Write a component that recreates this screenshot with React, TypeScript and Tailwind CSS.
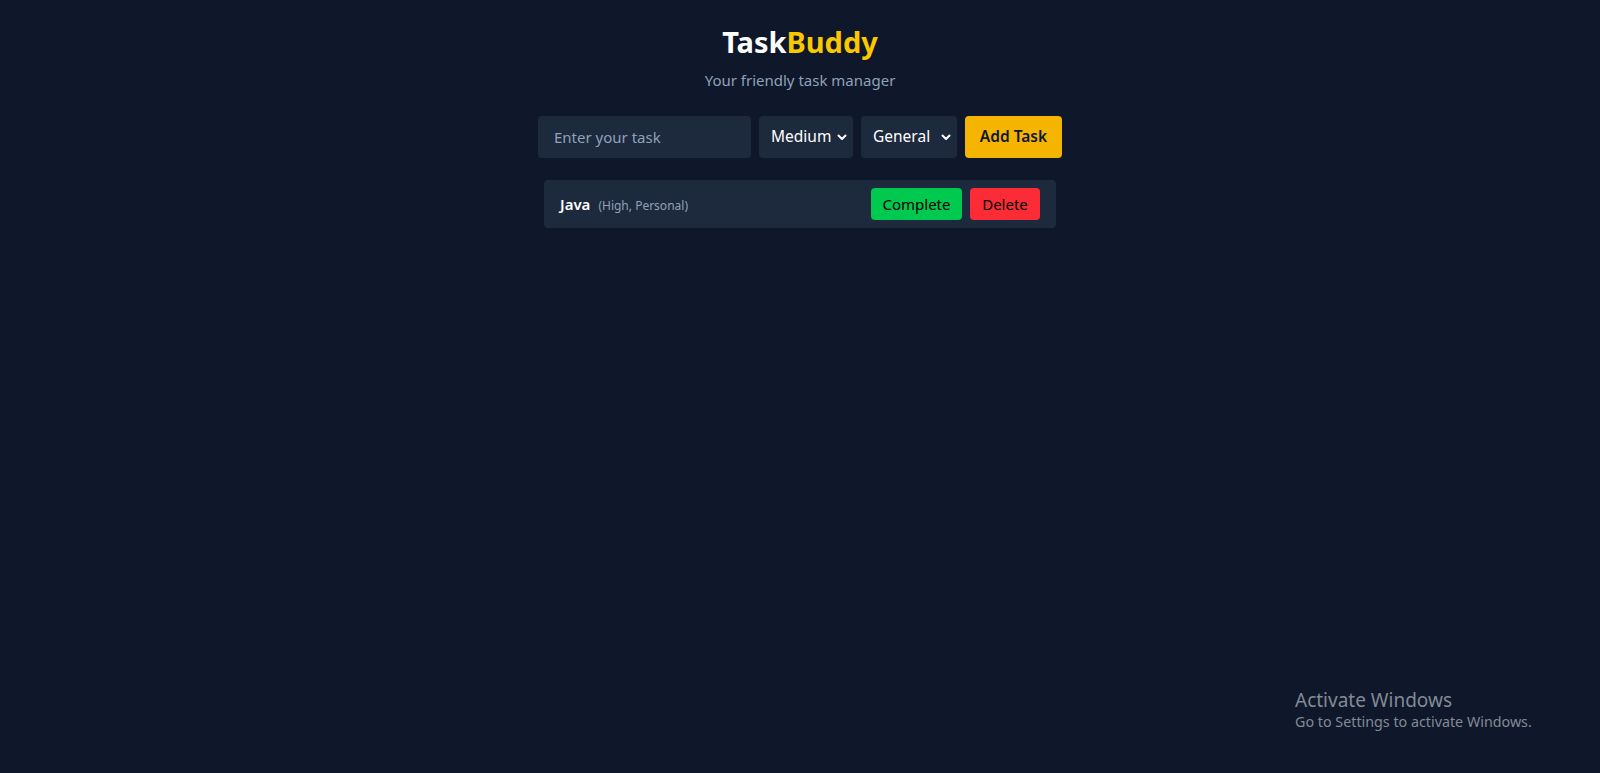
import React, { useState } from 'react'

type Task = {
  id: number
  text: string
  priority: string
  category: string
}

const Chevron: React.FC = () => (
  <svg
    className="pointer-events-none absolute right-[5px] top-1/2 -translate-y-1/2"
    width="12"
    height="12"
    viewBox="0 0 12 12"
    fill="none"
  >
    <path d="M2.5 4.5 L6 8 L9.5 4.5" stroke="white" strokeWidth="2" strokeLinecap="round" strokeLinejoin="round" />
  </svg>
)

export default function App() {
  const [text, setText] = useState('')
  const [priority, setPriority] = useState('Medium')
  const [category, setCategory] = useState('General')
  const [tasks, setTasks] = useState<Task[]>([
    { id: 1, text: 'Java', priority: 'High', category: 'Personal' },
  ])

  const addTask = () => {
    if (!text.trim()) return
    setTasks([...tasks, { id: Date.now(), text, priority, category }])
    setText('')
  }

  return (
    <div
      className="relative min-h-[773px] bg-[#0f172b] px-6 pt-6 text-white"
      style={{ fontFamily: '"Segoe UI", "Noto Sans", sans-serif' }}
    >
      {/* Header */}
      <h1 className="mb-2 text-center text-[29px] leading-9 font-bold">
        Task<span className="text-[#fac800]">Buddy</span>
      </h1>
      <p className="mb-6 text-center text-[15px] leading-6 text-[#90a1b9]">Your friendly task manager</p>

      {/* Form */}
      <div className="mb-[22px] flex justify-center gap-2">
        <input
          value={text}
          onChange={(e) => setText(e.target.value)}
          placeholder="Enter your task"
          className="h-[42px] w-[213px] rounded bg-[#1d293d] px-4 text-[15px] text-white placeholder:text-[#90a1b9] outline-none"
        />
        <div className="relative">
          <select
            value={priority}
            onChange={(e) => setPriority(e.target.value)}
            className="h-[42px] w-[94px] appearance-none rounded bg-[#1d293d] pl-3 text-[15.5px] text-white outline-none"
          >
            <option>Low</option>
            <option>Medium</option>
            <option>High</option>
          </select>
          <Chevron />
        </div>
        <div className="relative">
          <select
            value={category}
            onChange={(e) => setCategory(e.target.value)}
            className="h-[42px] w-[96px] appearance-none rounded bg-[#1d293d] pl-3 text-[15.5px] text-white outline-none"
          >
            <option>General</option>
            <option>Work</option>
            <option>Personal</option>
          </select>
          <Chevron />
        </div>
        <button
          onClick={addTask}
          className="h-[42px] w-[97px] rounded bg-[#f5b400] text-[15.5px] font-semibold text-[#0f172b]"
        >
          Add Task
        </button>
      </div>

      {/* Task list */}
      <ul className="mx-auto flex max-w-lg flex-col gap-2">
        {tasks.map((task) => (
          <li
            key={task.id}
            className="flex h-[48px] items-center justify-between rounded bg-[#1d293d] px-4"
          >
            <div className="flex items-baseline">
              <span className="text-[15px] font-semibold text-white">{task.text}</span>
              <span className="ml-2 text-[12px] text-[#90a1b9]">
                ({task.priority}, {task.category})
              </span>
            </div>
            <div className="flex gap-2">
              <button className="h-8 w-[91px] rounded bg-[#00c950] text-[15px] text-black">Complete</button>
              <button
                onClick={() => setTasks(tasks.filter((t) => t.id !== task.id))}
                className="h-8 w-[70px] rounded bg-[#fb2c36] text-[15px] text-black"
              >
                Delete
              </button>
            </div>
          </li>
        ))}
      </ul>

      {/* Windows watermark */}
      <div className="absolute left-[1295px] top-[688px] text-[#838a94]">
        <div className="text-[19px] leading-6">Activate Windows</div>
        <div className="text-[14.3px] leading-5">Go to Settings to activate Windows.</div>
      </div>
    </div>
  )
}
